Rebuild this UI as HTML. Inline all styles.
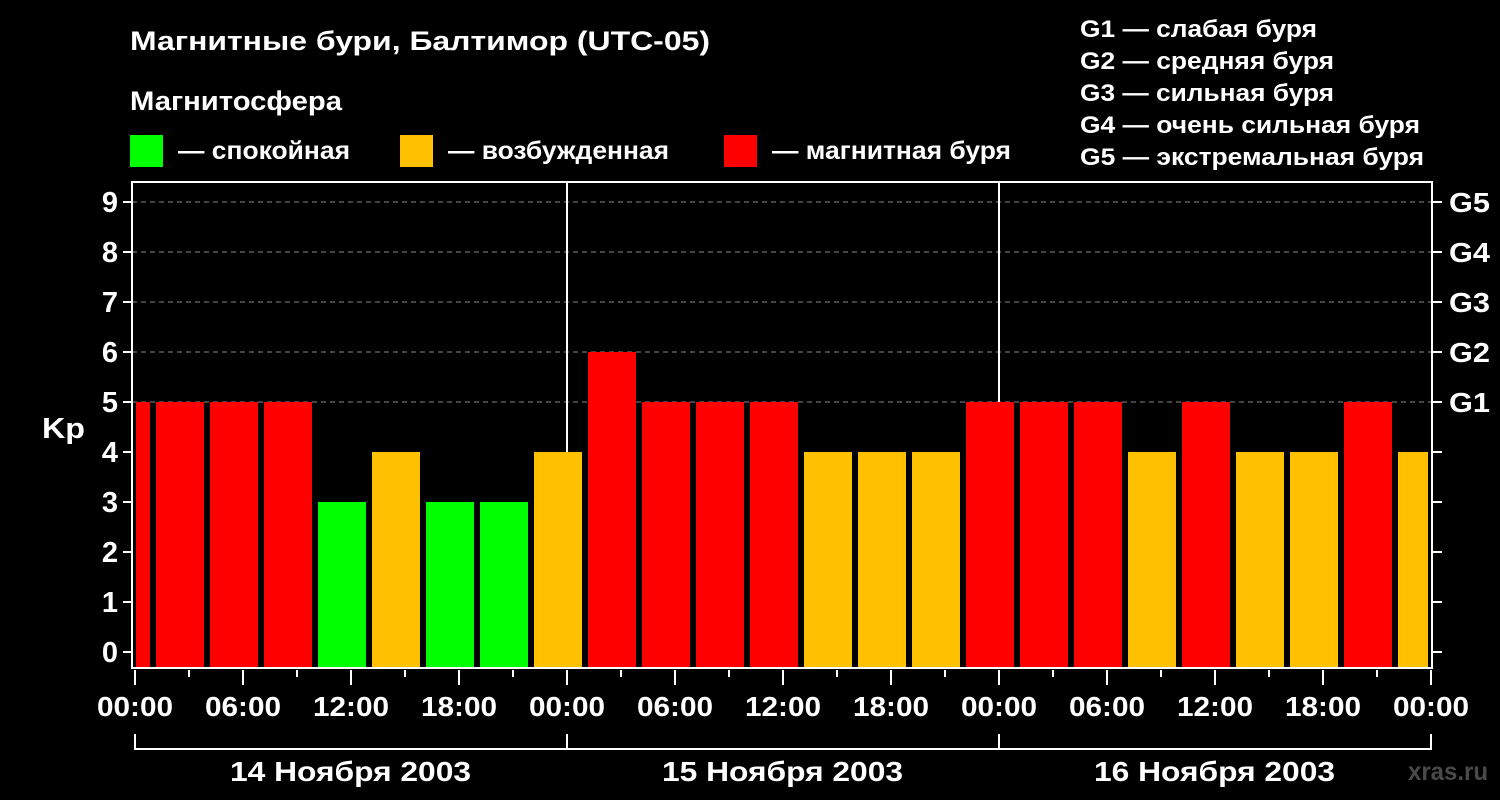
<!DOCTYPE html>
<html><head><meta charset="utf-8"><style>
html,body{margin:0;padding:0;background:#000;}
svg{display:block;}
text{font-family:"Liberation Sans",Arial,sans-serif;font-weight:bold;fill:#fff;}
</style></head><body>
<svg width="1500" height="800" viewBox="0 0 1500 800" xmlns="http://www.w3.org/2000/svg">
<rect width="1500" height="800" fill="#000"/>
<text x="130" y="50" font-size="27" textLength="580" lengthAdjust="spacingAndGlyphs">Магнитные бури, Балтимор (UTC-05)</text>
<text x="130" y="110" font-size="27" textLength="212" lengthAdjust="spacingAndGlyphs">Магнитосфера</text>
<rect x="130" y="135" width="33" height="32" fill="#00ff00"/>
<text x="178" y="159" font-size="25" textLength="172" lengthAdjust="spacingAndGlyphs">— спокойная</text>
<rect x="400" y="135" width="33" height="32" fill="#ffc000"/>
<text x="448" y="159" font-size="25" textLength="221" lengthAdjust="spacingAndGlyphs">— возбужденная</text>
<rect x="724" y="135" width="33" height="32" fill="#ff0000"/>
<text x="772" y="159" font-size="25" textLength="239" lengthAdjust="spacingAndGlyphs">— магнитная буря</text>
<g font-size="24">
<text x="1080" y="37" textLength="237" lengthAdjust="spacingAndGlyphs">G1 — слабая буря</text>
<text x="1080" y="69" textLength="254" lengthAdjust="spacingAndGlyphs">G2 — средняя буря</text>
<text x="1080" y="101" textLength="254" lengthAdjust="spacingAndGlyphs">G3 — сильная буря</text>
<text x="1080" y="133" textLength="340" lengthAdjust="spacingAndGlyphs">G4 — очень сильная буря</text>
<text x="1080" y="165" textLength="344" lengthAdjust="spacingAndGlyphs">G5 — экстремальная буря</text>
</g>
<g stroke="#888" stroke-width="1" stroke-dasharray="5,4">
<line x1="132" y1="402" x2="1432" y2="402"/>
<line x1="132" y1="352" x2="1432" y2="352"/>
<line x1="132" y1="302" x2="1432" y2="302"/>
<line x1="132" y1="252" x2="1432" y2="252"/>
<line x1="132" y1="202" x2="1432" y2="202"/>
</g>
<g stroke="#fff" stroke-width="2">
<line x1="567" y1="182" x2="567" y2="667"/>
<line x1="999" y1="182" x2="999" y2="667"/>
</g>
<g>
<rect x="136" y="402" width="14" height="266" fill="#f00"/>
<rect x="156" y="402" width="48" height="266" fill="#f00"/>
<rect x="210" y="402" width="48" height="266" fill="#f00"/>
<rect x="264" y="402" width="48" height="266" fill="#f00"/>
<rect x="318" y="502" width="48" height="166" fill="#00ff00"/>
<rect x="372" y="452" width="48" height="216" fill="#ffc000"/>
<rect x="426" y="502" width="48" height="166" fill="#00ff00"/>
<rect x="480" y="502" width="48" height="166" fill="#00ff00"/>
<rect x="534" y="452" width="48" height="216" fill="#ffc000"/>
<rect x="588" y="352" width="48" height="316" fill="#f00"/>
<rect x="642" y="402" width="48" height="266" fill="#f00"/>
<rect x="696" y="402" width="48" height="266" fill="#f00"/>
<rect x="750" y="402" width="48" height="266" fill="#f00"/>
<rect x="804" y="452" width="48" height="216" fill="#ffc000"/>
<rect x="858" y="452" width="48" height="216" fill="#ffc000"/>
<rect x="912" y="452" width="48" height="216" fill="#ffc000"/>
<rect x="966" y="402" width="48" height="266" fill="#f00"/>
<rect x="1020" y="402" width="48" height="266" fill="#f00"/>
<rect x="1074" y="402" width="48" height="266" fill="#f00"/>
<rect x="1128" y="452" width="48" height="216" fill="#ffc000"/>
<rect x="1182" y="402" width="48" height="266" fill="#f00"/>
<rect x="1236" y="452" width="48" height="216" fill="#ffc000"/>
<rect x="1290" y="452" width="48" height="216" fill="#ffc000"/>
<rect x="1344" y="402" width="48" height="266" fill="#f00"/>
<rect x="1398" y="452" width="30" height="216" fill="#ffc000"/>
</g>
<rect x="132" y="182" width="1300" height="486" fill="none" stroke="#fff" stroke-width="2"/>
<g stroke="#fff" stroke-width="2">
<line x1="123" y1="652" x2="132" y2="652"/><line x1="123" y1="602" x2="132" y2="602"/><line x1="123" y1="552" x2="132" y2="552"/><line x1="123" y1="502" x2="132" y2="502"/><line x1="123" y1="452" x2="132" y2="452"/><line x1="123" y1="402" x2="132" y2="402"/><line x1="123" y1="352" x2="132" y2="352"/><line x1="123" y1="302" x2="132" y2="302"/><line x1="123" y1="252" x2="132" y2="252"/><line x1="123" y1="202" x2="132" y2="202"/>
<line x1="1432" y1="652" x2="1442" y2="652"/><line x1="1432" y1="602" x2="1442" y2="602"/><line x1="1432" y1="552" x2="1442" y2="552"/><line x1="1432" y1="502" x2="1442" y2="502"/><line x1="1432" y1="452" x2="1442" y2="452"/><line x1="1432" y1="402" x2="1442" y2="402"/><line x1="1432" y1="352" x2="1442" y2="352"/><line x1="1432" y1="302" x2="1442" y2="302"/><line x1="1432" y1="252" x2="1442" y2="252"/><line x1="1432" y1="202" x2="1442" y2="202"/>
<line x1="135" y1="670" x2="135" y2="685"/><line x1="189" y1="670" x2="189" y2="677"/><line x1="243" y1="670" x2="243" y2="685"/><line x1="297" y1="670" x2="297" y2="677"/><line x1="351" y1="670" x2="351" y2="685"/><line x1="405" y1="670" x2="405" y2="677"/><line x1="459" y1="670" x2="459" y2="685"/><line x1="513" y1="670" x2="513" y2="677"/>
<line x1="567" y1="670" x2="567" y2="685"/><line x1="621" y1="670" x2="621" y2="677"/><line x1="675" y1="670" x2="675" y2="685"/><line x1="729" y1="670" x2="729" y2="677"/><line x1="783" y1="670" x2="783" y2="685"/><line x1="837" y1="670" x2="837" y2="677"/><line x1="891" y1="670" x2="891" y2="685"/><line x1="945" y1="670" x2="945" y2="677"/>
<line x1="999" y1="670" x2="999" y2="685"/><line x1="1053" y1="670" x2="1053" y2="677"/><line x1="1107" y1="670" x2="1107" y2="685"/><line x1="1161" y1="670" x2="1161" y2="677"/><line x1="1215" y1="670" x2="1215" y2="685"/><line x1="1269" y1="670" x2="1269" y2="677"/><line x1="1323" y1="670" x2="1323" y2="685"/><line x1="1377" y1="670" x2="1377" y2="677"/><line x1="1431" y1="670" x2="1431" y2="685"/>
<polyline points="135,734 135,749 1431,749 1431,734" fill="none"/>
<line x1="567" y1="734" x2="567" y2="749"/><line x1="999" y1="734" x2="999" y2="749"/>
</g>
<g font-size="29" text-anchor="end">
<text x="118" y="662">0</text><text x="118" y="612">1</text><text x="118" y="562">2</text><text x="118" y="512">3</text><text x="118" y="462">4</text><text x="118" y="412">5</text><text x="118" y="362">6</text><text x="118" y="312">7</text><text x="118" y="262">8</text><text x="118" y="212">9</text>
</g>
<text x="42" y="438" font-size="29" textLength="43" lengthAdjust="spacingAndGlyphs">Kp</text>
<g font-size="28">
<text x="1449" y="212" textLength="41" lengthAdjust="spacingAndGlyphs">G5</text><text x="1449" y="262" textLength="41" lengthAdjust="spacingAndGlyphs">G4</text><text x="1449" y="312" textLength="41" lengthAdjust="spacingAndGlyphs">G3</text><text x="1449" y="362" textLength="41" lengthAdjust="spacingAndGlyphs">G2</text><text x="1449" y="412" textLength="41" lengthAdjust="spacingAndGlyphs">G1</text>
</g>
<g font-size="28">
<text x="97" y="716" textLength="76" lengthAdjust="spacingAndGlyphs">00:00</text><text x="205" y="716" textLength="76" lengthAdjust="spacingAndGlyphs">06:00</text><text x="313" y="716" textLength="76" lengthAdjust="spacingAndGlyphs">12:00</text><text x="421" y="716" textLength="76" lengthAdjust="spacingAndGlyphs">18:00</text>
<text x="529" y="716" textLength="76" lengthAdjust="spacingAndGlyphs">00:00</text><text x="637" y="716" textLength="76" lengthAdjust="spacingAndGlyphs">06:00</text><text x="745" y="716" textLength="76" lengthAdjust="spacingAndGlyphs">12:00</text><text x="853" y="716" textLength="76" lengthAdjust="spacingAndGlyphs">18:00</text>
<text x="961" y="716" textLength="76" lengthAdjust="spacingAndGlyphs">00:00</text><text x="1069" y="716" textLength="76" lengthAdjust="spacingAndGlyphs">06:00</text><text x="1177" y="716" textLength="76" lengthAdjust="spacingAndGlyphs">12:00</text><text x="1285" y="716" textLength="76" lengthAdjust="spacingAndGlyphs">18:00</text>
<text x="1393" y="716" textLength="76" lengthAdjust="spacingAndGlyphs">00:00</text>
<text x="230" y="781" textLength="241" lengthAdjust="spacingAndGlyphs">14 Ноября 2003</text><text x="662" y="781" textLength="241" lengthAdjust="spacingAndGlyphs">15 Ноября 2003</text><text x="1094" y="781" textLength="241" lengthAdjust="spacingAndGlyphs">16 Ноября 2003</text>
</g>
<text x="1408" y="780" font-size="25" textLength="80" lengthAdjust="spacingAndGlyphs" style="fill:#4a4a4a">xras.ru</text>
</svg>
</body></html>
